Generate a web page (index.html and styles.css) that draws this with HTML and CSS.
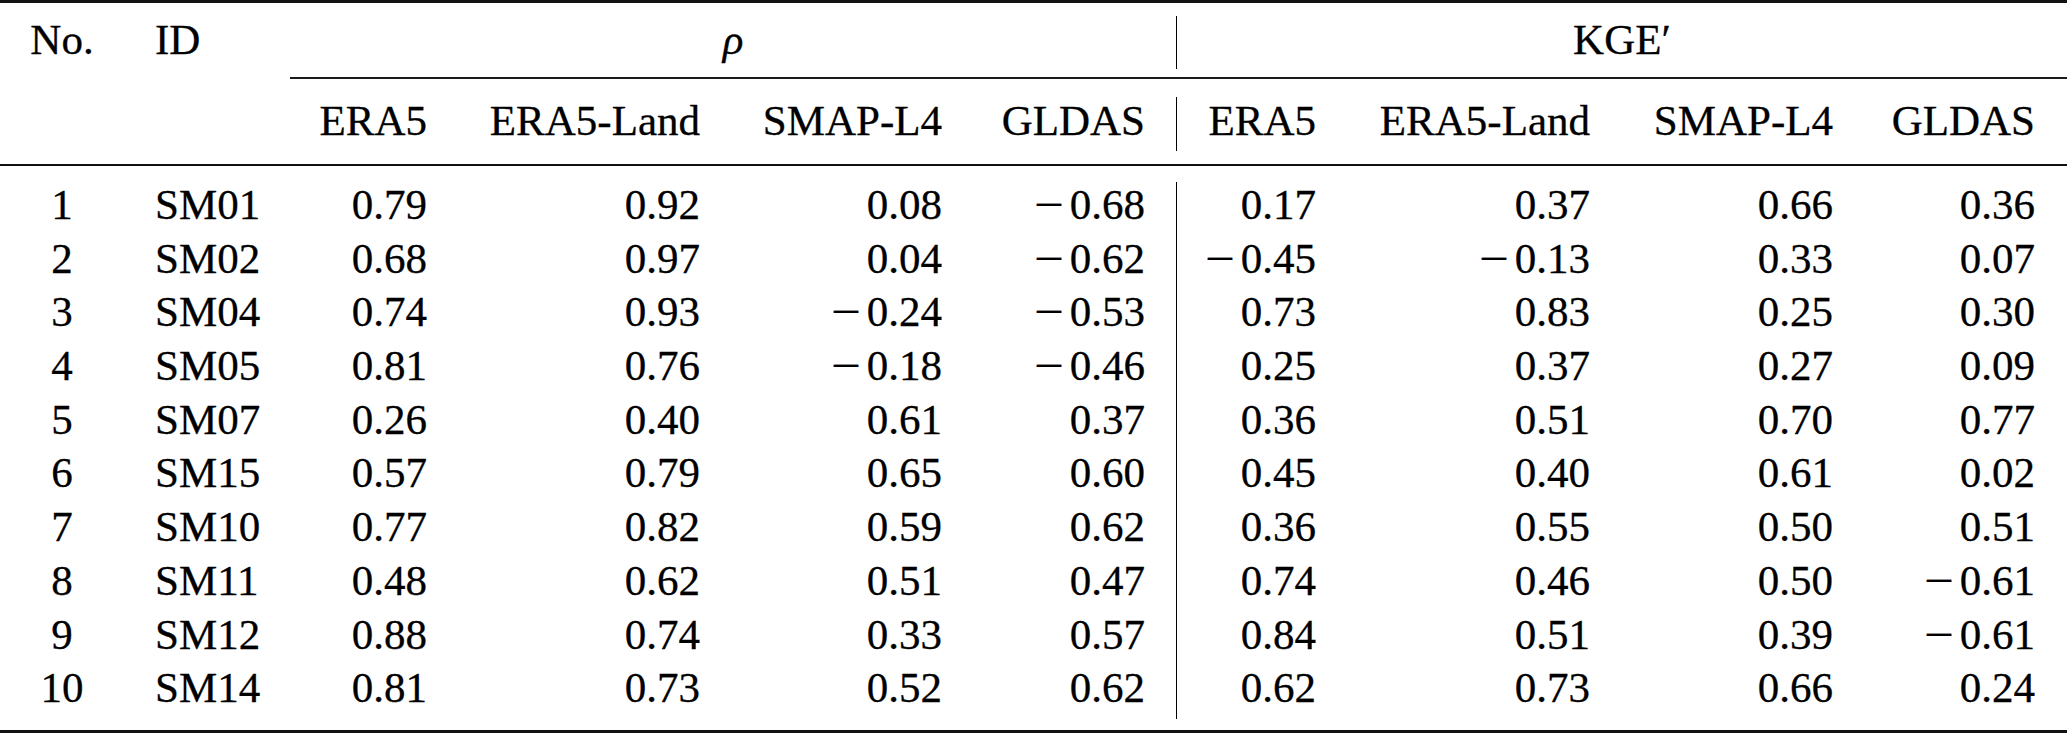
FILE: index.html
```html
<!DOCTYPE html>
<html lang="en">
<head>
<meta charset="utf-8">
<title>Correlation and KGE′ table</title>
<link rel="stylesheet" href="styles.css">
</head>
<body>
<div class="tbl">
  <div class="row hdr1">
    <div class="c ctr">No.</div>
    <div class="c id">ID</div>
    <div class="c grp rho"><i>ρ</i></div>
    <div class="c grp kge">KGE′</div>
  </div>
  <div class="cmid"></div>
  <div class="row hdr2">
    <div class="c ctr"></div>
    <div class="c id"></div>
    <div class="c num">ERA5</div>
    <div class="c num">ERA5-Land</div>
    <div class="c num">SMAP-L4</div>
    <div class="c num sep">GLDAS</div>
    <div class="c num">ERA5</div>
    <div class="c num">ERA5-Land</div>
    <div class="c num">SMAP-L4</div>
    <div class="c num last">GLDAS</div>
  </div>
  <div class="midrule"></div>
  <div class="body">
    <div class="row data">
      <div class="c ctr">1</div><div class="c id">SM01</div>
      <div class="c num">0.79</div><div class="c num">0.92</div><div class="c num">0.08</div><div class="c num sep"><span class="neg">−</span>0.68</div>
      <div class="c num">0.17</div><div class="c num">0.37</div><div class="c num">0.66</div><div class="c num last">0.36</div>
    </div>
    <div class="row data">
      <div class="c ctr">2</div><div class="c id">SM02</div>
      <div class="c num">0.68</div><div class="c num">0.97</div><div class="c num">0.04</div><div class="c num sep"><span class="neg">−</span>0.62</div>
      <div class="c num"><span class="neg">−</span>0.45</div><div class="c num"><span class="neg">−</span>0.13</div><div class="c num">0.33</div><div class="c num last">0.07</div>
    </div>
    <div class="row data">
      <div class="c ctr">3</div><div class="c id">SM04</div>
      <div class="c num">0.74</div><div class="c num">0.93</div><div class="c num"><span class="neg">−</span>0.24</div><div class="c num sep"><span class="neg">−</span>0.53</div>
      <div class="c num">0.73</div><div class="c num">0.83</div><div class="c num">0.25</div><div class="c num last">0.30</div>
    </div>
    <div class="row data">
      <div class="c ctr">4</div><div class="c id">SM05</div>
      <div class="c num">0.81</div><div class="c num">0.76</div><div class="c num"><span class="neg">−</span>0.18</div><div class="c num sep"><span class="neg">−</span>0.46</div>
      <div class="c num">0.25</div><div class="c num">0.37</div><div class="c num">0.27</div><div class="c num last">0.09</div>
    </div>
    <div class="row data">
      <div class="c ctr">5</div><div class="c id">SM07</div>
      <div class="c num">0.26</div><div class="c num">0.40</div><div class="c num">0.61</div><div class="c num sep">0.37</div>
      <div class="c num">0.36</div><div class="c num">0.51</div><div class="c num">0.70</div><div class="c num last">0.77</div>
    </div>
    <div class="row data">
      <div class="c ctr">6</div><div class="c id">SM15</div>
      <div class="c num">0.57</div><div class="c num">0.79</div><div class="c num">0.65</div><div class="c num sep">0.60</div>
      <div class="c num">0.45</div><div class="c num">0.40</div><div class="c num">0.61</div><div class="c num last">0.02</div>
    </div>
    <div class="row data">
      <div class="c ctr">7</div><div class="c id">SM10</div>
      <div class="c num">0.77</div><div class="c num">0.82</div><div class="c num">0.59</div><div class="c num sep">0.62</div>
      <div class="c num">0.36</div><div class="c num">0.55</div><div class="c num">0.50</div><div class="c num last">0.51</div>
    </div>
    <div class="row data">
      <div class="c ctr">8</div><div class="c id">SM11</div>
      <div class="c num">0.48</div><div class="c num">0.62</div><div class="c num">0.51</div><div class="c num sep">0.47</div>
      <div class="c num">0.74</div><div class="c num">0.46</div><div class="c num">0.50</div><div class="c num last"><span class="neg">−</span>0.61</div>
    </div>
    <div class="row data">
      <div class="c ctr">9</div><div class="c id">SM12</div>
      <div class="c num">0.88</div><div class="c num">0.74</div><div class="c num">0.33</div><div class="c num sep">0.57</div>
      <div class="c num">0.84</div><div class="c num">0.51</div><div class="c num">0.39</div><div class="c num last"><span class="neg">−</span>0.61</div>
    </div>
    <div class="row data">
      <div class="c ctr">10</div><div class="c id">SM14</div>
      <div class="c num">0.81</div><div class="c num">0.73</div><div class="c num">0.52</div><div class="c num sep">0.62</div>
      <div class="c num">0.62</div><div class="c num">0.73</div><div class="c num">0.66</div><div class="c num last">0.24</div>
    </div>
  </div>
</div>
</body>
</html>
```

FILE: styles.css
```css
html, body {
  margin: 0;
  padding: 0;
  background: #ffffff;
}

body {
  font-family: "Liberation Serif", "Times New Roman", serif;
  font-size: 43px;
  color: #000000;
  -webkit-text-stroke: 0.3px #000000;
}

.tbl {
  width: 2067px;
  border-top: 3px solid #111111;
  border-bottom: 3px solid #111111;
  box-sizing: border-box;
}

.row {
  display: grid;
  grid-template-columns: 124px 166px 137px 273px 242px 235px 139px 274px 243px 234px;
}

.c {
  box-sizing: border-box;
  white-space: nowrap;
}

.ctr {
  text-align: center;
}

.id {
  padding-left: 31px;
  text-align: left;
}

.num {
  text-align: right;
}

.sep {
  padding-right: 31px;
  border-right: 1px solid #000000;
}

.last {
  padding-right: 32px;
}

/* header row 1 */
.hdr1 {
  padding-top: 13px;
  padding-bottom: 8px;
}

.hdr1 .c {
  height: 53px;
  line-height: 47px;
}

.grp {
  text-align: center;
}

.rho {
  grid-column: 3 / 7;
  border-right: 1px solid #000000;
}

.kge {
  grid-column: 7 / 11;
}

.cmid {
  margin-left: 290px;
  height: 2px;
  background: #1a1a1a;
}

/* header row 2 */
.hdr2 {
  padding-top: 18px;
  padding-bottom: 13px;
}

.hdr2 .c {
  height: 54px;
  line-height: 47px;
}

.midrule {
  height: 2px;
  background: #111111;
}

/* body */
.body {
  padding-top: 16px;
  padding-bottom: 11px;
}

.data .c {
  height: 53.7px;
  line-height: 45px;
}

.neg {
  display: inline-block;
  transform: scaleX(1.22);
  margin-right: 8px;
}
```
